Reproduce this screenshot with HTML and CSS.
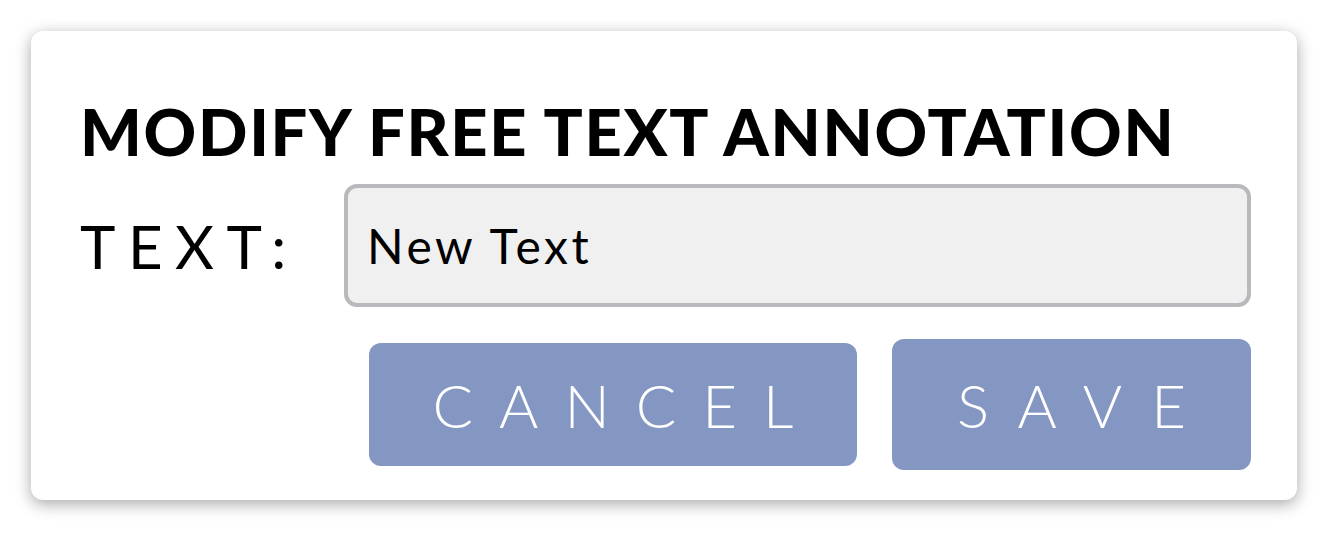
FILE: index.html
```html
<!DOCTYPE html>
<html>
<head>
<meta charset="utf-8">
<link rel="stylesheet" href="styles.css">
</head>
<body>
<div class="card">
  <h1 class="title">MODIFY FREE TEXT ANNOTATION</h1>
  <div class="field">
    <label class="label">TEXT:</label>
    <div class="input">New Text</div>
  </div>
  <div class="actions">
    <button class="btn btn-cancel">CANCEL</button>
    <button class="btn btn-save">SAVE</button>
  </div>
</div>
</body>
</html>
```

FILE: styles.css
```css
html, body {
  margin: 0;
  padding: 0;
  background: #ffffff;
}
body {
  box-sizing: border-box;
  min-height: 534px;
  padding: 31px 0 0 31px;
  font-family: Lato, "Liberation Sans", sans-serif;
}
.card {
  box-sizing: border-box;
  width: 1266px;
  height: 469px;
  background: #fff;
  border-radius: 12px;
  box-shadow: 0 4px 16px rgba(0, 0, 0, 0.35);
  padding: 68px 46px 0 49px;
  display: flex;
  flex-direction: column;
}
.title {
  margin: 0;
  font-family: Lato, sans-serif;
  font-weight: 900;
  font-size: 65px;
  line-height: 64px;
  color: #000;
  letter-spacing: 1.7px;
  white-space: nowrap;
}
.field {
  display: flex;
  align-items: center;
  margin-top: 21px;
}
.label {
  width: 264px;
  font-size: 60px;
  font-weight: 400;
  letter-spacing: 12.5px;
  color: #000;
}
.input {
  box-sizing: border-box;
  width: 907px;
  height: 123px;
  background: #f0f0f0;
  border: 4px solid #b8b8bd;
  border-radius: 13px;
  padding-left: 19px;
  display: flex;
  align-items: center;
  font-size: 48px;
  font-weight: 400;
  letter-spacing: 3.5px;
  color: #000;
}
.actions {
  display: flex;
  justify-content: flex-end;
  align-items: center;
  gap: 35px;
  margin-top: 32px;
}
.btn {
  border: none;
  background: #8497c3;
  color: #fff;
  font-family: Lato, "Liberation Sans", sans-serif;
  font-weight: 300;
  font-size: 60px;
  border-radius: 12px;
  padding: 0;
  display: flex;
  align-items: center;
  justify-content: center;
}
.btn-cancel {
  width: 488px;
  height: 123px;
  letter-spacing: 26px;
  padding-left: 26px;
}
.btn-save {
  width: 359px;
  height: 131px;
  letter-spacing: 29px;
  padding-left: 29px;
}
```
